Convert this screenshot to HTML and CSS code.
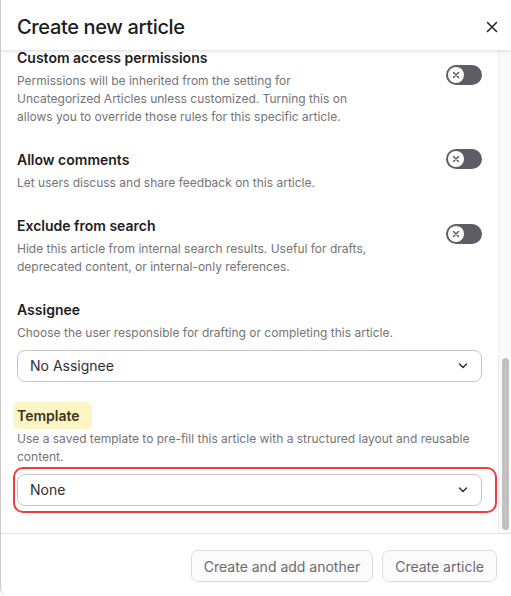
FILE: index.html
```html
<!DOCTYPE html>
<html lang="en">
<head>
<meta charset="utf-8">
<title>Create new article</title>
<link rel="stylesheet" href="styles.css">
</head>
<body>
<div class="dialog">
  <header class="dialog-header">
    <h1 class="dialog-title">Create new article</h1>
    <button class="close-btn" aria-label="Close">
      <svg width="12" height="12" viewBox="0 0 12 12"><path d="M1.5 1.5 L10.5 10.5 M10.5 1.5 L1.5 10.5" stroke="#222" stroke-width="1.5" stroke-linecap="round"/></svg>
    </button>
  </header>
  <div class="dialog-main">
    <div class="scroll-content">
      <div class="fields">
        <section class="field field-toggle field-first">
          <div class="field-text field-text-narrow">
            <h2 class="field-label">Custom access permissions</h2>
            <p class="field-desc">Permissions will be inherited from the setting for Uncategorized Articles unless customized. Turning this on allows you to override those rules for this specific article.</p>
          </div>
          <span class="toggle"><span class="knob"><svg width="8" height="8" viewBox="0 0 8 8"><path d="M1.5 1.5 L6.5 6.5 M6.5 1.5 L1.5 6.5" stroke="#555" stroke-width="1.4" stroke-linecap="round"/></svg></span></span>
        </section>
        <section class="field field-toggle">
          <div class="field-text">
            <h2 class="field-label">Allow comments</h2>
            <p class="field-desc">Let users discuss and share feedback on this article.</p>
          </div>
          <span class="toggle"><span class="knob"><svg width="8" height="8" viewBox="0 0 8 8"><path d="M1.5 1.5 L6.5 6.5 M6.5 1.5 L1.5 6.5" stroke="#555" stroke-width="1.4" stroke-linecap="round"/></svg></span></span>
        </section>
        <section class="field field-toggle">
          <div class="field-text">
            <h2 class="field-label">Exclude from search</h2>
            <p class="field-desc">Hide this article from internal search results. Useful for drafts, deprecated content, or internal-only references.</p>
          </div>
          <span class="toggle"><span class="knob"><svg width="8" height="8" viewBox="0 0 8 8"><path d="M1.5 1.5 L6.5 6.5 M6.5 1.5 L1.5 6.5" stroke="#555" stroke-width="1.4" stroke-linecap="round"/></svg></span></span>
        </section>
        <section class="field">
          <h2 class="field-label">Assignee</h2>
          <p class="field-desc">Choose the user responsible for drafting or completing this article.</p>
          <div class="select">
            <span class="select-value">No Assignee</span>
            <svg class="chevron" width="10" height="6" viewBox="0 0 10 6"><path d="M1.5 1 L5 4.5 L8.5 1" fill="none" stroke="#333" stroke-width="1.5" stroke-linecap="round" stroke-linejoin="round"/></svg>
          </div>
        </section>
        <section class="field">
          <h2 class="field-label highlight">Template</h2>
          <p class="field-desc">Use a saved template to pre-fill this article with a structured layout and reusable content.</p>
          <div class="select select-flagged">
            <span class="select-value">None</span>
            <svg class="chevron" width="10" height="6" viewBox="0 0 10 6"><path d="M1.5 1 L5 4.5 L8.5 1" fill="none" stroke="#333" stroke-width="1.5" stroke-linecap="round" stroke-linejoin="round"/></svg>
            <span class="flag-ring"></span>
          </div>
        </section>
      </div>
    </div>
    <div class="scrollbar"><div class="thumb"></div></div>
  </div>
  <footer class="dialog-footer">
    <button class="btn">Create and add another</button>
    <button class="btn">Create article</button>
  </footer>
</div>
</body>
</html>
```
FILE: styles.css
```css
* { box-sizing: border-box; }
html, body { margin: 0; padding: 0; background: #ffffff; }
body {
  font-family: Inter, "Noto Sans", "Liberation Sans", sans-serif;
  width: 511px;
  height: 596px;
  overflow: hidden;
}
.dialog {
  width: 511px;
  height: 596px;
  background: #fff;
  border-left: 1px solid #c9c9cc;
  border-bottom-left-radius: 8px;
  display: flex;
  flex-direction: column;
  overflow: hidden;
}
.dialog-header {
  height: 50px;
  flex: 0 0 50px;
  display: flex;
  align-items: center;
  justify-content: space-between;
  padding: 0 12px 0 16px;
  position: relative;
  z-index: 2;
  background: #fff;
  box-shadow: 0 1px 3px rgba(0,0,0,0.10), 0 2px 6px rgba(0,0,0,0.04);
}
.dialog-title {
  margin: 0;
  font-size: 20px;
  font-weight: 500;
  color: #1c1c1e;
  line-height: 26px;
  padding-top: 3px;
  letter-spacing: -0.35px;
}
.close-btn {
  border: 0;
  background: transparent;
  padding: 0;
  width: 14px;
  height: 14px;
  display: flex;
  align-items: center;
  justify-content: center;
  margin-top: 4px;
}
.dialog-main {
  flex: 1 1 auto;
  display: flex;
  min-height: 0;
  border-bottom: 1px solid #e2e2e4;
}
.scroll-content {
  flex: 1 1 auto;
  overflow: hidden;
  padding: 0 16px;
  border-right: 1px solid #ececee;
}
.fields {
  display: flex;
  flex-direction: column;
  gap: 23px;
}
.field-first { margin-top: -3.5px; }
.field { position: relative; }
.field-toggle {
  display: flex;
  align-items: center;
  justify-content: space-between;
}
.field-text { max-width: 360px; }
.field-text-narrow { max-width: 340px; }
.field-label {
  margin: 0;
  font-size: 14px;
  font-weight: 600;
  line-height: 22px;
  color: #1d1d1f;
}
.field-desc {
  margin: 3px 0 0;
  font-size: 12px;
  line-height: 18px;
  color: #747478;
}
.highlight {
  display: inline-block;
  background: #fdf5c3;
  color: #3b351c;
  border-radius: 6px;
  padding: 3px 12px 2px 4px;
  margin: -3px -12px -2px -4px;
}
.toggle {
  flex: 0 0 36px;
  width: 36px;
  height: 20px;
  border-radius: 10px;
  background: #5e5d65;
  display: flex;
  align-items: center;
  padding-left: 2px;
  margin-bottom: 22px;
}
.knob {
  width: 16px;
  height: 16px;
  border-radius: 50%;
  background: #fff;
  display: flex;
  align-items: center;
  justify-content: center;
}
.select {
  position: relative;
  margin-top: 8px;
  height: 32px;
  border: 1px solid #c6c6ca;
  border-radius: 8px;
  display: flex;
  align-items: center;
  justify-content: space-between;
  padding: 0 13px 0 12px;
  background: #fff;
}
.select-value {
  font-size: 14px;
  color: #2f2f33;
}
.chevron { display: block; }
.flag-ring {
  position: absolute;
  left: -5px;
  top: -8px;
  right: -16px;
  bottom: -8px;
  border: 2px solid #ef3d3d;
  border-radius: 10px;
  pointer-events: none;
}
.scrollbar {
  flex: 0 0 12px;
  width: 12px;
  background: #fafafa;
  display: flex;
  flex-direction: column;
  align-items: center;
  justify-content: flex-end;
  padding-bottom: 3px;
}
.thumb {
  width: 7px;
  height: 172px;
  border-radius: 4px;
  background: #c1c1c1;
}
.dialog-footer {
  flex: 0 0 auto;
  height: 62px;
  display: flex;
  justify-content: flex-end;
  align-items: flex-start;
  gap: 9px;
  padding: 16px 14px 0 0;
}
.btn {
  font-family: Inter, "Noto Sans", "Liberation Sans", sans-serif;
  height: 32px;
  padding: 0 12px;
  font-size: 14px;
  color: #6a6a70;
  background: #fbfbfc;
  border: 1px solid #dcdce0;
  border-radius: 7px;
}
```
